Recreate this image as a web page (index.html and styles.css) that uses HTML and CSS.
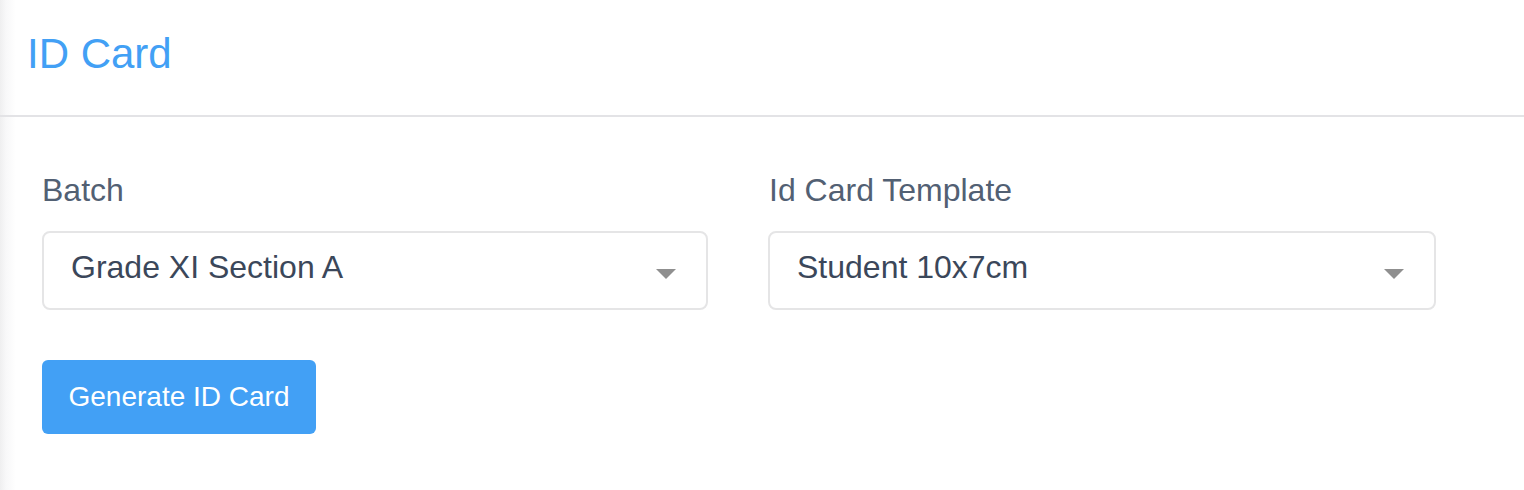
FILE: index.html
```html
<!DOCTYPE html>
<html>
<head>
<meta charset="utf-8">
<link rel="stylesheet" href="styles.css">
</head>
<body>
<div class="page">
  <header class="header">
    <h1 class="title">ID Card</h1>
  </header>
  <section class="content">
    <div class="row">
      <div class="field field-batch">
        <label class="label">Batch</label>
        <div class="select">
          <span class="select-text">Grade XI Section A</span>
          <span class="caret"></span>
        </div>
      </div>
      <div class="field field-template">
        <label class="label">Id Card Template</label>
        <div class="select">
          <span class="select-text">Student 10x7cm</span>
          <span class="caret"></span>
        </div>
      </div>
    </div>
    <button class="btn">Generate ID Card</button>
  </section>
</div>
</body>
</html>
```

FILE: styles.css
```css
html, body {
  margin: 0;
  padding: 0;
  background: #fff;
}
body {
  font-family: "Liberation Sans", Arial, Helvetica, sans-serif;
  width: 1524px;
  height: 490px;
  overflow: hidden;
}
.page {
  height: 490px;
  background: linear-gradient(to right, #efeff0 0px, #f8f8f9 6px, #ffffff 16px);
}
.header {
  height: 117px;
  border-bottom: 2px solid #e3e3e6;
  box-sizing: border-box;
  padding: 29px 0 0 27px;
}
.title {
  margin: 0;
  font-size: 42px;
  font-weight: normal;
  line-height: 49px;
  color: #42a0f5;
}
.content {
  padding: 55px 0 0 42px;
}
.row {
  display: flex;
  gap: 60px;
}
.field-batch { width: 666px; }
.field-template { width: 668px; }
.label {
  display: block;
  font-size: 32px;
  line-height: 37px;
  color: #526073;
  margin-bottom: 22px;
  padding-left: 1px;
}
.field-batch .label { padding-left: 0; }
.select {
  box-sizing: border-box;
  height: 79px;
  border: 2px solid #e5e5e6;
  border-radius: 8px;
  padding: 16px 30px 0 27px;
  display: flex;
  align-items: flex-start;
  justify-content: space-between;
  background: #fff;
}
.select-text {
  font-size: 32px;
  line-height: 37px;
  color: #3b475a;
}
.caret {
  width: 0;
  height: 0;
  border-left: 10px solid transparent;
  border-right: 10px solid transparent;
  border-top: 10px solid #8f8f8f;
  margin-top: 20px;
}
.btn {
  margin-top: 50px;
  display: block;
  width: 274px;
  height: 74px;
  border: none;
  border-radius: 6px;
  background: #42a0f5;
  color: #fff;
  font-family: "Liberation Sans", Arial, Helvetica, sans-serif;
  font-size: 28px;
  line-height: 32px;
  padding: 0;
  cursor: pointer;
}
```
